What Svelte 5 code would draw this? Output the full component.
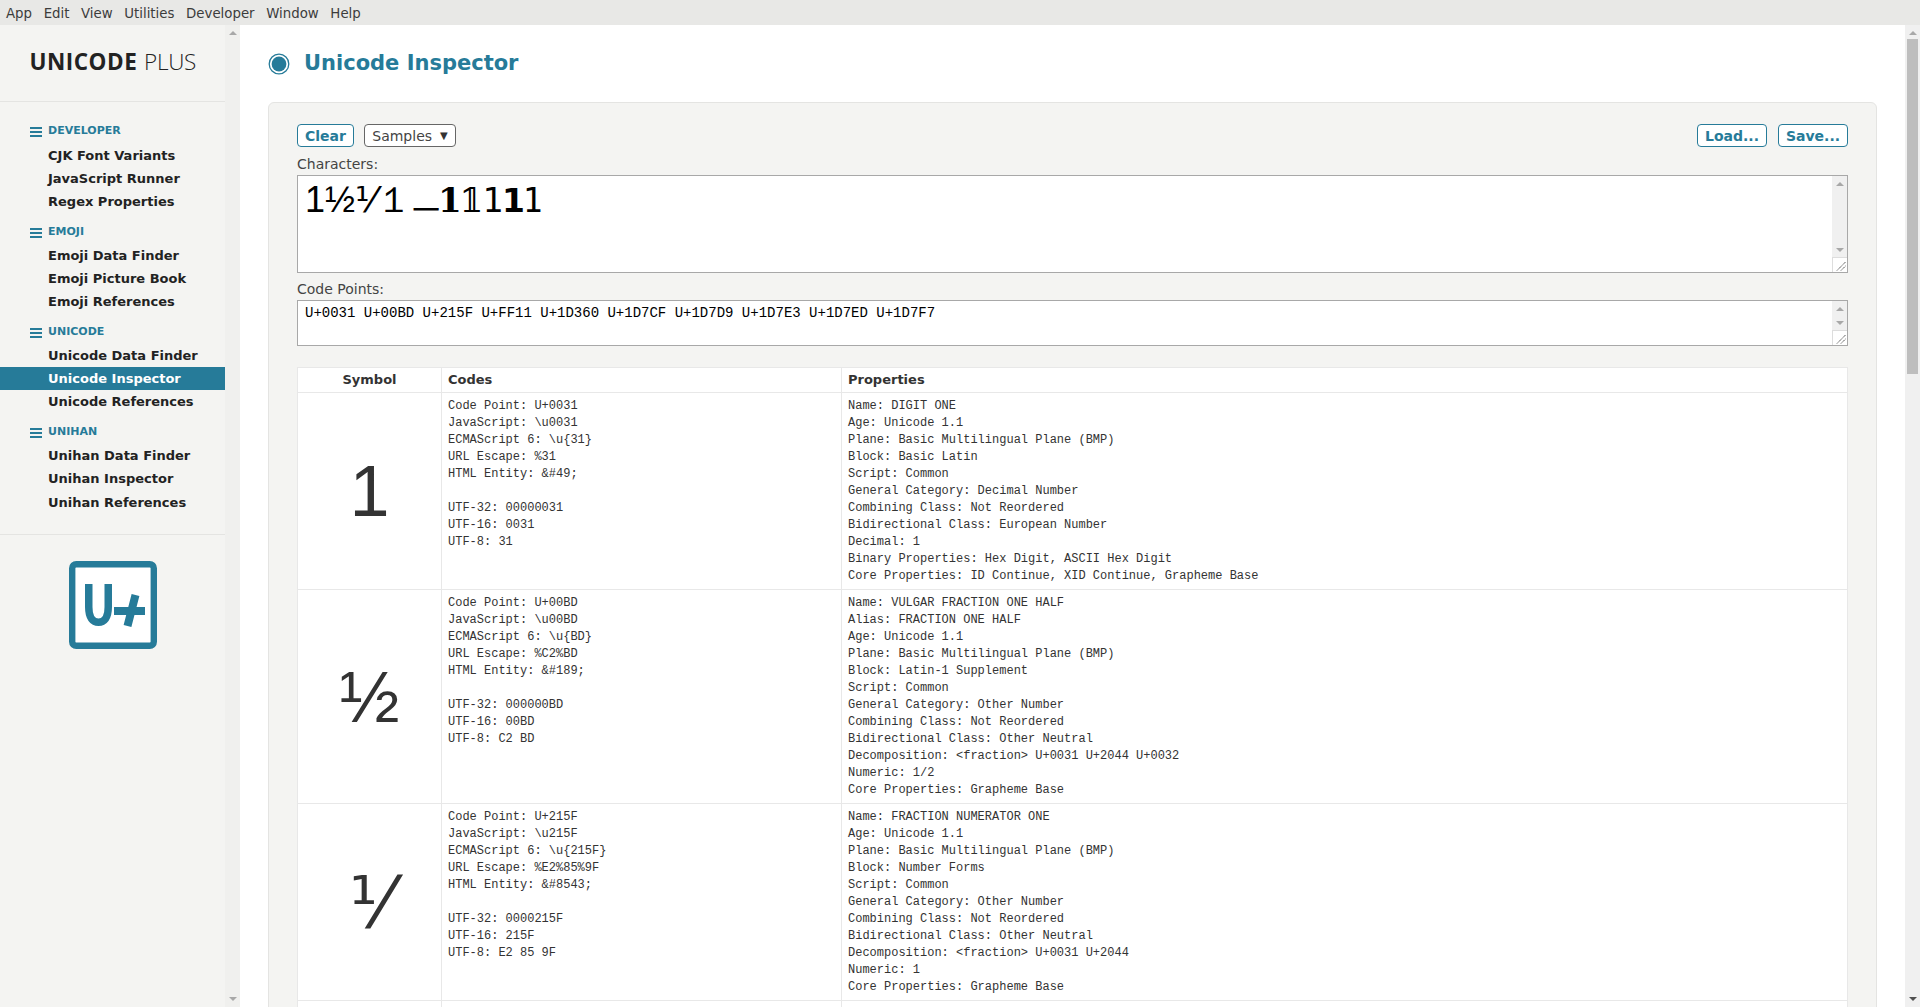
<script>
  const menus = ['App', 'Edit', 'View', 'Utilities', 'Developer', 'Window', 'Help'];
  const groups = [
    { name: 'DEVELOPER', items: ['CJK Font Variants', 'JavaScript Runner', 'Regex Properties'] },
    { name: 'EMOJI', items: ['Emoji Data Finder', 'Emoji Picture Book', 'Emoji References'] },
    { name: 'UNICODE', items: ['Unicode Data Finder', 'Unicode Inspector', 'Unicode References'] },
    { name: 'UNIHAN', items: ['Unihan Data Finder', 'Unihan Inspector', 'Unihan References'] }
  ];
  const rows = [
    {
      symbol: '1',
      codes: 'Code Point: U+0031\nJavaScript: \\u0031\nECMAScript 6: \\u{31}\nURL Escape: %31\nHTML Entity: &#49;\n\nUTF-32: 00000031\nUTF-16: 0031\nUTF-8: 31',
      props: 'Name: DIGIT ONE\nAge: Unicode 1.1\nPlane: Basic Multilingual Plane (BMP)\nBlock: Basic Latin\nScript: Common\nGeneral Category: Decimal Number\nCombining Class: Not Reordered\nBidirectional Class: European Number\nDecimal: 1\nBinary Properties: Hex Digit, ASCII Hex Digit\nCore Properties: ID Continue, XID Continue, Grapheme Base'
    },
    {
      symbol: '½',
      codes: 'Code Point: U+00BD\nJavaScript: \\u00BD\nECMAScript 6: \\u{BD}\nURL Escape: %C2%BD\nHTML Entity: &#189;\n\nUTF-32: 000000BD\nUTF-16: 00BD\nUTF-8: C2 BD',
      props: 'Name: VULGAR FRACTION ONE HALF\nAlias: FRACTION ONE HALF\nAge: Unicode 1.1\nPlane: Basic Multilingual Plane (BMP)\nBlock: Latin-1 Supplement\nScript: Common\nGeneral Category: Other Number\nCombining Class: Not Reordered\nBidirectional Class: Other Neutral\nDecomposition: <fraction> U+0031 U+2044 U+0032\nNumeric: 1/2\nCore Properties: Grapheme Base'
    },
    {
      symbol: '⅟',
      codes: 'Code Point: U+215F\nJavaScript: \\u215F\nECMAScript 6: \\u{215F}\nURL Escape: %E2%85%9F\nHTML Entity: &#8543;\n\nUTF-32: 0000215F\nUTF-16: 215F\nUTF-8: E2 85 9F',
      props: 'Name: FRACTION NUMERATOR ONE\nAge: Unicode 1.1\nPlane: Basic Multilingual Plane (BMP)\nBlock: Number Forms\nScript: Common\nGeneral Category: Other Number\nCombining Class: Not Reordered\nBidirectional Class: Other Neutral\nDecomposition: <fraction> U+0031 U+2044\nNumeric: 1\nCore Properties: Grapheme Base'
    },
    { symbol: '', codes: '', props: '' }
  ];
</script>

<div class="app">
  <nav class="menubar">
    {#each menus as m}<span>{m}</span>{/each}
  </nav>
  <div class="body">
    <aside class="sidebar">
      <div class="sidecontent">
        <div class="brand"><b>UNICODE</b> <span>PLUS</span></div>
        <div class="groups">
          {#each groups as g}
            <section class="group">
              <h3><i class="burger"></i>{g.name}</h3>
              <ul>
                {#each g.items as item}
                  <li class:active={item === 'Unicode Inspector'}>{item}</li>
                {/each}
              </ul>
            </section>
          {/each}
        </div>
        <div class="logo">
          <svg width="88" height="88" viewBox="0 0 88 88">
            <rect x="3.200" y="3.200" width="81.600" height="81.600" rx="4" fill="#fff" stroke="#267b99" stroke-width="6.400"/>
            <path d="M19.750 23V46C19.750 57 24 61.300 29.500 61.300S39.250 57 39.250 46V23" fill="none" stroke="#267b99" stroke-width="7.500"/>
            <path d="M45 50h31M66.500 34l-8 31" fill="none" stroke="#267b99" stroke-width="8"/>
          </svg>
        </div>
      </div>
      <div class="vbar side"><i class="up"></i><i class="down"></i></div>
    </aside>

    <main class="main">
      <header class="title">
        <svg width="22" height="22" viewBox="0 0 22 22">
          <circle cx="11" cy="11" r="9.800" fill="none" stroke="#267b99" stroke-width="1.300"/>
          <circle cx="11" cy="11" r="7.400" fill="#267b99"/>
        </svg>
        <h1>Unicode Inspector</h1>
      </header>

      <div class="panel">
        <div class="toolbar">
          <button class="btn clear">Clear</button>
          <button class="select">Samples<span>▼</span></button>
          <button class="btn io push">Load...</button>
          <button class="btn io">Save...</button>
        </div>
        <div class="label">Characters:</div>
        <div class="field chars">
          <div class="text">1½<span class="dj">⅟</span>１<span class="rod">𝍠</span><span class="tex">𝟏𝟙</span><span class="sb">𝟣𝟭</span><span class="lt">𝟷</span></div>
          <div class="fbar">
            <div class="track"><i class="up"></i><i class="down"></i></div>
            <div class="corner"><svg width="15" height="15" viewBox="0 0 15 15"><path d="M5 13.500L13.500 5M9 13.500l4.500-4.500" stroke="#444" stroke-width="1" stroke-dasharray="1.200 .6" fill="none"/></svg></div>
          </div>
        </div>
        <div class="label second">Code Points:</div>
        <div class="field points">
          <div class="text">U+0031 U+00BD U+215F U+FF11 U+1D360 U+1D7CF U+1D7D9 U+1D7E3 U+1D7ED U+1D7F7</div>
          <div class="fbar">
            <div class="track"><i class="up"></i><i class="down"></i></div>
            <div class="corner"><svg width="15" height="15" viewBox="0 0 15 15"><path d="M5 13.500L13.500 5M9 13.500l4.500-4.500" stroke="#444" stroke-width="1" stroke-dasharray="1.200 .6" fill="none"/></svg></div>
          </div>
        </div>

        <table>
          <colgroup><col class="c1"/><col class="c2"/><col/></colgroup>
          <thead><tr><th class="center">Symbol</th><th>Codes</th><th>Properties</th></tr></thead>
          <tbody>
            {#each rows as r}
              <tr>
                <td class="symbol" class:dj={r.symbol === '⅟'}>{r.symbol}</td>
                <td class="mono">{r.codes}</td>
                <td class="mono">{r.props}</td>
              </tr>
            {/each}
          </tbody>
        </table>
      </div>
    </main>
    <div class="vbar page"><i class="up"></i><b class="thumb"></b><i class="down"></i></div>
  </div>
</div>

<style>
  :global(body) { margin: 0; overflow: hidden; background: #fff; }
  .app { height: 1007px; display: flex; flex-direction: column; overflow: hidden; font-family: "DejaVu Sans", sans-serif; color: #333; }
  .menubar { height: 25px; flex: none; background: #e8e8e6; display: flex; align-items: center; gap: 11.600px; padding: 1px 0 0 6px; font-size: 13.330px; color: #3c3c3c; box-sizing: border-box; }
  .body { flex: 1; min-height: 0; display: flex; }
  .sidebar { width: 240px; flex: none; display: flex; background: #f4f4f2; }
  .sidecontent { width: 225px; flex: none; }
  .brand { height: 77px; box-sizing: border-box; padding: 21px 0 0 29.500px; font-family: "Open Sans", sans-serif; font-size: 22.500px; line-height: 32px; color: #222; border-bottom: 1px solid #e4e4e2; white-space: nowrap; }
  .brand b { font-weight: 700; letter-spacing: .5px; }
  .brand span { font-weight: 300; letter-spacing: -.3px; margin-left: 1px; }
  .groups { padding-top: 18px; height: 433px; box-sizing: border-box; border-bottom: 1px solid #e4e4e2; overflow: hidden; }
  .group { margin-bottom: 7px; }
  .group:last-child li:last-child { margin-top: 1px; }
  .group h3 { margin: 0; height: 24px; box-sizing: border-box; display: flex; align-items: center; font-size: 11px; font-weight: 700; color: #267b99; padding-left: 30px; line-height: 18px; }
  .group:first-child h3 { padding-bottom: 2px; }
  .burger { width: 12px; height: 2px; margin-right: 6px; background: #267b99; box-shadow: 0 4px #267b99, 0 -4px #267b99; position: relative; top: 1px; }
  ul { list-style: none; margin: 0; padding: 0; }
  li { height: 23px; line-height: 23px; padding-left: 48px; font-size: 13px; font-weight: 700; color: #222; }
  li.active { background: #267b99; color: #fff; }
  .logo { display: flex; justify-content: center; padding-top: 26px; padding-left: 1px; }
  .vbar { width: 15px; flex: none; background: #f0f0ee; display: flex; flex-direction: column; align-items: center; box-sizing: border-box; padding: 6px 0; }
  .vbar .down { margin-top: auto; }
  .vbar.page { background: #f0f0f0; }
  .vbar.page .down { border-top-color: #505050; }
  .thumb { display: block; width: 11px; height: 335px; background: #bebebe; margin-top: 4px; }
  i.up, i.down { display: block; width: 0; height: 0; border-left: 4px solid transparent; border-right: 4px solid transparent; }
  i.up { border-bottom: 4px solid #a8a8a8; }
  i.down { border-top: 4px solid #a8a8a8; }
  .main { flex: 1; min-width: 0; overflow: hidden; background: #fff; padding: 0 28px; box-sizing: border-box; }
  .title { height: 77px; display: flex; align-items: center; gap: 14px; padding-bottom: 1px; box-sizing: border-box; }
  .title svg { position: relative; top: 1px; }
  h1 { margin: 0; font-size: 21px; font-weight: 700; color: #267b99; }
  .panel { background: #f4f4f2; border: 1px solid #e4e4e2; border-radius: 6px 6px 0 0; padding: 21px 28px; height: 1200px; box-sizing: border-box; }
  .toolbar { display: flex; gap: 10px; height: 23px; }
  button { font-family: inherit; font-size: 14px; background: #fff; border-radius: 4px; padding: 0; height: 23px; box-sizing: border-box; }
  .btn { border: 1px solid #267b99; color: #267b99; font-weight: 700; }
  .btn.clear { width: 57px; }
  .btn.io { width: 70px; }
  .btn.push { margin-left: auto; margin-right: 1px; }
  .select { border: 1px solid #666; color: #444; display: flex; align-items: center; justify-content: center; gap: 8px; width: 92px; }
  .select span { font-size: 10px; color: #333; }
  .label { font-size: 14px; line-height: 17px; margin-top: 9px; height: 19px; color: #444; }
  .label.second { margin-top: 6px; height: 21px; padding-top: 2px; box-sizing: border-box; line-height: 17px; }
  .field { display: flex; border: 1px solid #a8a8a8; background: #fff; box-sizing: border-box; }
  .chars { height: 98px; }
  .points { height: 46px; }
  .text { flex: 1; padding: 3px 7px; color: #000; }
  .chars .text { font-family: "Liberation Sans", sans-serif; font-size: 36px; line-height: 38px; padding-top: 5px; }
  .dj { font-family: "DejaVu Sans", sans-serif; }
  .rod { position: relative; top: 9px; font-size: 28px; }
  .tex { font-family: "DejaVu Math TeX Gyre", "DejaVu Serif", serif; font-size: 34px; }
  .sb { font-family: "DejaVu Sans", sans-serif; font-size: 33px; letter-spacing: -2px; }
  .lt { font-family: "DejaVu Sans Mono", monospace; font-size: 33px; font-weight: 400; }
  .points .text { font-family: "Liberation Mono", monospace; font-size: 14px; line-height: 17px; padding-top: 4px; }
  .fbar { width: 15px; flex: none; display: flex; flex-direction: column; background: #f0f0f0; }
  .track { flex: 1; display: flex; flex-direction: column; align-items: center; padding: 6px 0 5px; box-sizing: border-box; }
  .track .down { margin-top: auto; }
  .corner { height: 15px; width: 15px; background: #fff; border: solid #ddd; border-width: 1px 0 0 1px; box-sizing: border-box; overflow: hidden; }
  .corner svg { display: block; margin: -1px 0 0 -1px; }
  table { margin-top: 21px; width: 100%; border-collapse: collapse; table-layout: fixed; background: #fff; }
  .c1 { width: 144px; }
  .c2 { width: 400px; }
  th, td { border: 1px solid #e8e8e8; padding: 4px 6px; vertical-align: top; text-align: left; }
  th { font-size: 13px; font-weight: 700; height: 25px; box-sizing: border-box; line-height: 16px; color: #333; }
  th.center { text-align: center; }
  td.mono { font-family: "Liberation Mono", monospace; font-size: 12px; line-height: 17px; white-space: pre-wrap; color: #333; padding: 5px 6px 4px; }
  td.symbol { font-family: "Liberation Sans", sans-serif; font-size: 72px; text-align: center; vertical-align: middle; color: #333; padding: 0; line-height: 1; }
  td.symbol.dj { font-family: "DejaVu Sans", sans-serif; }
</style>
